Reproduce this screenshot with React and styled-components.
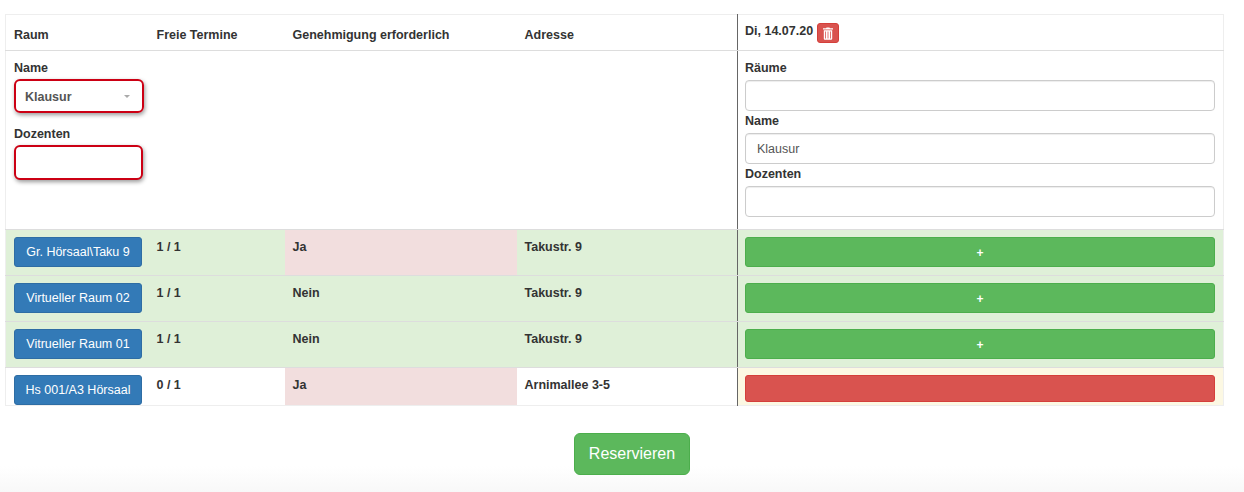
import React from "react";
import styled, { createGlobalStyle } from "styled-components";

const rooms = [
  { name: "Gr. Hörsaal\\Taku 9", free: "1 / 1", approval: "Ja", address: "Takustr. 9", open: true },
  { name: "Virtueller Raum 02", free: "1 / 1", approval: "Nein", address: "Takustr. 9", open: true },
  { name: "Vitrueller Raum 01", free: "1 / 1", approval: "Nein", address: "Takustr. 9", open: true },
  { name: "Hs 001/A3 Hörsaal", free: "0 / 1", approval: "Ja", address: "Arnimallee 3-5", open: false },
];

function TrashIcon() {
  return (
    <svg width="12" height="13" viewBox="0 0 12 13" fill="#fff">
      <path d="M4 1.2 4.6.4h2.800l.6.8H11v1.300H1V1.200H4z" />
      <path d="M1.800 3.200h8.400v8.600c0 .5-.4.9-.9.9H2.700c-.5 0-.9-.4-.9-.9V3.200zM3.200 4.400v7h.8v-7h-.8zm2.400 0v7h.8v-7h-.8zm2.400 0v7h.8v-7H8z" fillRule="evenodd" />
    </svg>
  );
}

export default function App() {
  return (
    <Page>
      <GlobalStyle />
      <Table>
        <colgroup>
          <col width="143" />
          <col width="136" />
          <col width="232" />
          <col width="221" />
          <col width="486" />
        </colgroup>
        <thead>
          <tr>
            <HeadCell>Raum</HeadCell>
            <HeadCell>Freie Termine</HeadCell>
            <HeadCell>Genehmigung erforderlich</HeadCell>
            <HeadCell>Adresse</HeadCell>
            <DayHeadCell>
              <DayTitle>
                <DayLabel>Di, 14.07.20</DayLabel>
                <TrashButton>
                  <TrashIcon />
                </TrashButton>
              </DayTitle>
            </DayHeadCell>
          </tr>
        </thead>
        <tbody>
          <tr>
            <FilterCell colSpan="4">
              <FilterStack>
                <FieldLabel $tight>Name</FieldLabel>
                <FakeSelect>
                  Klausur
                  <Caret />
                </FakeSelect>
                <FieldLabel $tight $gap>Dozenten</FieldLabel>
                <MarkedInput />
              </FilterStack>
            </FilterCell>
            <DayFilterCell>
              <FieldLabel>Räume</FieldLabel>
              <TextInput />
              <FieldLabel>Name</FieldLabel>
              <TextInput defaultValue="Klausur" />
              <FieldLabel>Dozenten</FieldLabel>
              <TextInput />
            </DayFilterCell>
          </tr>
          {rooms.map((room, index) => {
            const last = index === rooms.length - 1;
            return (
              <RoomRow key={room.name} $open={room.open} $last={last}>
                <ButtonCell>
                  <RoomButton>{room.name}</RoomButton>
                </ButtonCell>
                <RoomCell>{room.free}</RoomCell>
                <RoomCell $danger={room.approval === "Ja"}>{room.approval}</RoomCell>
                <RoomCell>{room.address}</RoomCell>
                <SlotCell $open={room.open}>
                  <SlotButton $open={room.open}>{room.open ? "+" : ""}</SlotButton>
                </SlotCell>
              </RoomRow>
            );
          })}
        </tbody>
      </Table>
      <Actions>
        <ReserveButton>Reservieren</ReserveButton>
      </Actions>
    </Page>
  );
}

const GlobalStyle = createGlobalStyle`
  html, body {
    margin: 0;
    padding: 0;
    background: #fff;
  }
  * {
    box-sizing: border-box;
  }
  body {
    font-family: "Liberation Sans", Arial, sans-serif;
    font-size: 12.5px;
    color: #333;
  }
`;

const Page = styled.div`
  width: 1244px;
  height: 492px;
  padding: 14px 20px 0 5px;
  overflow: hidden;
  background: linear-gradient(to bottom, #fff 0, #fff 466px, #f8f8f8 492px);
`;

const Table = styled.table`
  width: 1218px;
  table-layout: fixed;
  border-collapse: collapse;
  border: 1px solid #eee;
  background: #fff;
`;

const HeadCell = styled.th`
  height: 36px;
  padding: 4px 8px 0;
  text-align: left;
  font-size: 12.5px;
  font-weight: 700;
  color: #333;
  border-bottom: 1px solid #ddd;
`;

const DayHeadCell = styled(HeadCell)`
  padding: 0 8px 0 7px;
  border-left: 1px solid #666;
`;

const DayTitle = styled.div`
  display: flex;
  align-items: center;
  gap: 4px;
`;

const DayLabel = styled.span`
  margin-bottom: 3px;
`;

const TrashButton = styled.button`
  display: flex;
  align-items: center;
  justify-content: center;
  width: 22px;
  height: 20px;
  margin-top: 1px;
  padding: 0;
  border: 1px solid #d43f3a;
  border-radius: 3px;
  background: #d9534f;
`;

const FilterCell = styled.td`
  height: 179px;
  padding: 9px 8px 8px;
  vertical-align: top;
  border-bottom: 1px solid #ddd;
`;

const FilterStack = styled.div`
  display: flex;
  flex-direction: column;
  align-items: flex-start;
`;

const DayFilterCell = styled(FilterCell)`
  padding: 9px 8px 0 7px;
  border-left: 1px solid #666;
`;

const FieldLabel = styled.label`
  display: block;
  height: 14px;
  margin-top: ${(p) => (p.$gap ? "13px" : "0")};
  margin-bottom: ${(p) => (p.$tight ? "5px" : "6px")};
  font-size: 12.5px;
  line-height: 16px;
  font-weight: 700;
  color: #333;
`;

const FakeSelect = styled.div`
  position: relative;
  display: flex;
  align-items: center;
  width: 130px;
  height: 34px;
  padding: 2px 0 0 9px;
  font-size: 12.5px;
  font-weight: 700;
  color: #555;
  border: 2px solid #cc0014;
  border-radius: 6px;
  box-shadow: 1px 2px 4px rgba(0, 0, 0, 0.4);
`;

const Caret = styled.span`
  position: absolute;
  right: 12px;
  top: 14px;
  border-left: 3px solid transparent;
  border-right: 3px solid transparent;
  border-top: 3px solid #aaa;
`;

const MarkedInput = styled.input`
  display: block;
  width: 129px;
  height: 35px;
  border: 2px solid #cc0014;
  border-radius: 6px;
  box-shadow: 1px 2px 4px rgba(0, 0, 0, 0.4);
  background: #fff;
`;

const TextInput = styled.input`
  display: block;
  width: 100%;
  height: 31px;
  margin-bottom: 2px;
  padding: 0 11px;
  font-family: inherit;
  font-size: 12.5px;
  color: #555;
  background: #fff;
  border: 1px solid #ccc;
  border-radius: 4px;
  box-shadow: inset 0 1px 1px rgba(0, 0, 0, 0.075);
`;

const RoomRow = styled.tr`
  height: ${(p) => (p.$last ? "38px" : "46px")};
  background: ${(p) => (p.$open ? "#dff0d8" : "#fff")};
`;

const RoomCell = styled.td`
  padding: 9px 8px 0;
  vertical-align: top;
  font-size: 12.5px;
  line-height: 17px;
  font-weight: 700;
  color: #333;
  border-bottom: 1px solid #ddd;
  background: ${(p) => (p.$danger ? "#f2dede" : "transparent")};
  ${RoomRow}:last-child & {
    border-bottom: none;
  }
`;

const ButtonCell = styled(RoomCell)`
  padding-top: 7px;
`;

const RoomButton = styled.button`
  display: block;
  width: 128px;
  height: 30px;
  padding: 0;
  font-family: inherit;
  font-size: 12.5px;
  white-space: nowrap;
  color: #fff;
  background: #337ab7;
  border: 1px solid #2e6da4;
  border-radius: 3px;
`;

const SlotCell = styled(RoomCell)`
  padding: 7px 8px 0 7px;
  border-left: 1px solid #666;
  background: ${(p) => (p.$open ? "#dff0d8" : "#fcf8e3")};
`;

const SlotButton = styled.button`
  display: block;
  width: 470px;
  height: ${(p) => (p.$open ? "30px" : "27px")};
  padding: 2px 0 0;
  font-family: inherit;
  font-size: 12px;
  font-weight: 700;
  color: #fff;
  background: ${(p) => (p.$open ? "#5cb85c" : "#d9534f")};
  border: 1px solid ${(p) => (p.$open ? "#4cae4c" : "#d43f3a")};
  border-radius: 3px;
`;

const Actions = styled.div`
  display: flex;
  justify-content: center;
  margin-top: 27px;
  padding-left: 35px;
`;

const ReserveButton = styled.button`
  width: 116px;
  height: 42px;
  padding: 0;
  font-family: inherit;
  font-size: 16px;
  color: #fff;
  background: #5cb85c;
  border: 1px solid #4cae4c;
  border-radius: 6px;
`;
